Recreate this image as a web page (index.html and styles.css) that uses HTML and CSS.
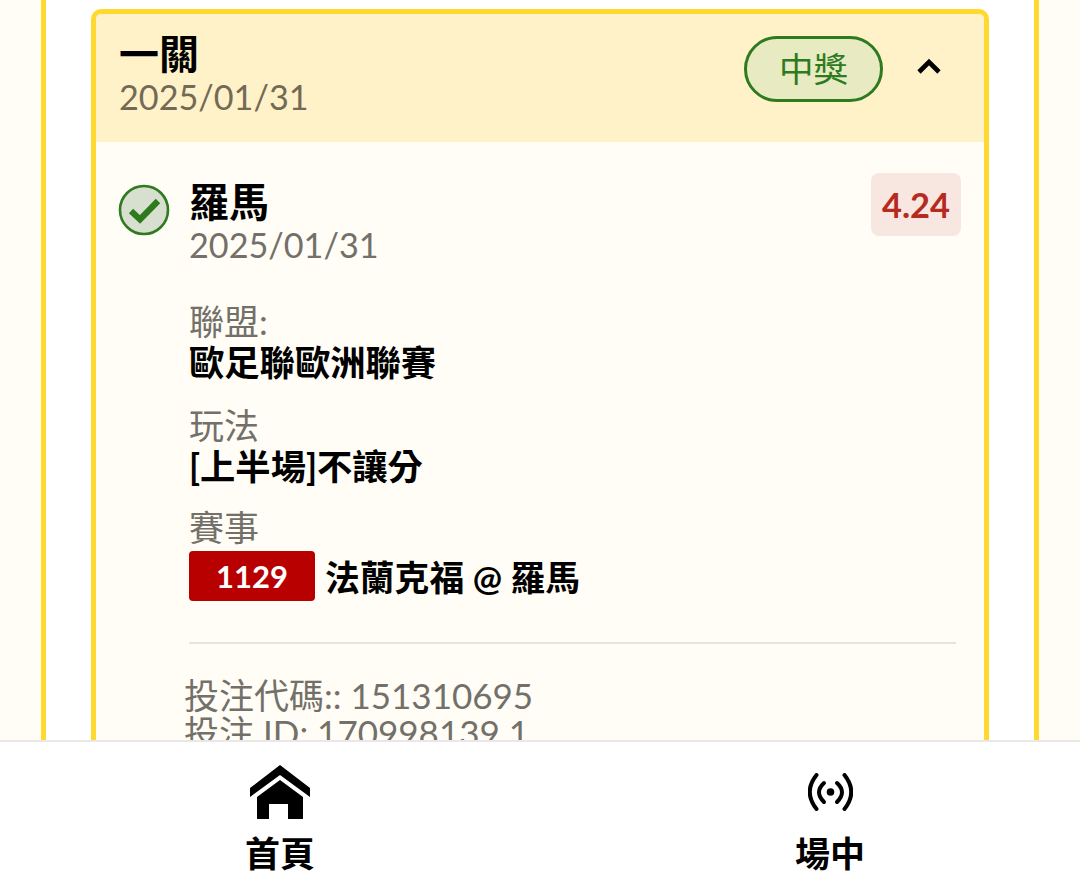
FILE: index.html
```html
<!DOCTYPE html>
<html lang="zh-Hant">
<head>
  <meta charset="UTF-8">
  <title>投注紀錄</title>
  <link rel="stylesheet" href="styles.css">
</head>
<body>
  <main class="content">
    <div class="panel">
      <section class="card">
        <header class="card-head">
          <div class="head-text">
            <div class="title">一關</div>
            <div class="date">2025/01/31</div>
          </div>
          <span class="status">中獎</span>
          <svg class="chevron" width="26" height="16" viewBox="0 0 26 16">
            <path d="M3 14 L13 4 L23 14" fill="none" stroke="#000" stroke-width="4.6"/>
          </svg>
        </header>
        <div class="card-body">
          <div class="pick">
            <svg class="check" width="52" height="52" viewBox="0 0 52 52">
              <circle cx="26" cy="26" r="24" fill="#d9dfcf" stroke="#2e7a1f" stroke-width="2.6"/>
              <path d="M13 27 L22 35.5 L40 17" fill="none" stroke="#2e7a1f" stroke-width="6.2"/>
            </svg>
            <div class="pick-main">
              <div class="pick-top">
                <div class="pick-name">
                  <div class="title">羅馬</div>
                  <div class="date grey">2025/01/31</div>
                </div>
                <span class="odds">4.24</span>
              </div>
              <dl class="info">
                <dt>聯盟:</dt>
                <dd>歐足聯歐洲聯賽</dd>
                <dt>玩法</dt>
                <dd class="play">[上半場]不讓分</dd>
                <dt>賽事</dt>
                <dd class="match"><span class="match-no">1129</span><span class="match-name">法蘭克福 @ 羅馬</span></dd>
              </dl>
              <hr class="divider">
            </div>
          </div>
          <div class="codes">
            <div>投注代碼:: 151310695</div>
            <div>投注 ID: 170998139 1</div>
          </div>
        </div>
      </section>
    </div>
  </main>

  <nav class="tabbar">
    <a class="tab" href="#">
      <span class="tab-icon">
        <svg width="60" height="54" viewBox="0 0 60 54">
          <path d="M30 0 L60 23 V32 L30 10 L0 32 V23 Z" fill="#000"/>
          <path d="M30 15 L53 32 V54 H38 V39 H19 V54 H7 V32 Z" fill="#000"/>
        </svg>
      </span>
      <span class="tab-label">首頁</span>
    </a>
    <a class="tab" href="#">
      <span class="tab-icon">
        <svg width="45" height="38" viewBox="0 0 45 38" fill="none" stroke="#000" stroke-width="4" stroke-linecap="round">
          <circle cx="22.5" cy="19" r="3.8" fill="#000" stroke="none"/>
          <path d="M16 10 Q6 19 16 29"/>
          <path d="M29 10 Q39 19 29 29"/>
          <path d="M8.5 2 Q-5 19 8.5 36"/>
          <path d="M36.5 2 Q50 19 36.5 36"/>
        </svg>
      </span>
      <span class="tab-label">場中</span>
    </a>
  </nav>
</body>
</html>
```

FILE: styles.css
```css
* {
  box-sizing: border-box;
  margin: 0;
  padding: 0;
}

html, body {
  height: 100%;
  overflow: hidden;
}

body {
  display: flex;
  flex-direction: column;
  height: 883px;
  background: #fffdf5;
  font-family: "Lato", "Noto Sans CJK TC", sans-serif;
  color: #000;
}

.content {
  height: 740px;
  overflow: hidden;
  padding: 0 41px;
}

.panel {
  height: 100%;
  padding: 9px 45px 0;
  background: #fff;
  border-left: 5px solid #ffd92f;
  border-right: 5px solid #ffd92f;
}

.card {
  height: 900px;
  background: #fffdf5;
  border: 5px solid #ffd92f;
  border-radius: 10px;
  overflow: hidden;
}

.card-head {
  display: flex;
  align-items: center;
  height: 128px;
  padding: 0 42px 8px 23px;
  background: #fff2c9;
}

.head-text {
  flex: 1;
}

.title {
  font-size: 40px;
  line-height: 45px;
  font-weight: 700;
}

.date {
  font-size: 34.2px;
  line-height: 40px;
  color: #736a55;
}

.date.grey {
  color: #73706a;
}

.status {
  width: 139px;
  height: 66px;
  margin: -10px 33px 0 0;
  border: 3px solid #2e7a1f;
  border-radius: 33px;
  background: #e8ebc1;
  color: #2e7a1f;
  font-size: 34.5px;
  line-height: 60px;
  text-align: center;
}

.chevron {
  margin-top: -16px;
}

.card-body {
  padding: 30px 23px 0 22px;
}

.pick {
  display: flex;
  gap: 19px;
}

.check {
  flex: none;
  margin-top: 12px;
}

.pick-main {
  flex: 1;
}

.pick-top {
  display: flex;
  justify-content: space-between;
  align-items: flex-start;
}

.pick-name {
  margin-top: 8px;
}

.odds {
  width: 90px;
  height: 63px;
  margin-top: 1px;
  border-radius: 8px;
  background: #f7e7e0;
  color: #b72a20;
  font-size: 34.5px;
  font-weight: 700;
  line-height: 63px;
  text-align: center;
}

.info {
  margin-top: 36px;
}

.info dt {
  font-size: 35px;
  line-height: 40px;
  color: #73706a;
}

.info dd {
  margin-bottom: 20px;
  font-size: 35.3px;
  line-height: 44px;
  font-weight: 700;
}

.info dd.play {
  margin-bottom: 18px;
}

.info dd.match {
  display: flex;
  align-items: center;
  gap: 10px;
  margin-top: 4px;
}

.match-no {
  width: 126px;
  height: 50px;
  border-radius: 4px;
  background: #b90000;
  color: #fff;
  font-size: 31px;
  line-height: 50px;
  text-align: center;
}

.match-name {
  padding-top: 4px;
  font-size: 34.8px;
}

.divider {
  margin: 41px 5px 0 0;
  border: 0;
  border-top: 2px solid #e6e4dd;
}

.codes {
  margin: 33px 0 0 66px;
  font-size: 35px;
  line-height: 37px;
  color: #73706a;
}

.tabbar {
  display: flex;
  flex: 1;
  gap: 50px;
  padding-left: 30px;
  background: #fff;
  border-top: 2px solid #e8e8e8;
}

.tab {
  flex: 1;
  display: flex;
  flex-direction: column;
  align-items: center;
  padding-top: 22px;
  color: #000;
  text-decoration: none;
}

.tab-icon {
  display: flex;
  align-items: center;
  justify-content: center;
  height: 56px;
}

.tab-label {
  margin-top: 10px;
  font-size: 35px;
  font-weight: 700;
  line-height: 46px;
}
```
